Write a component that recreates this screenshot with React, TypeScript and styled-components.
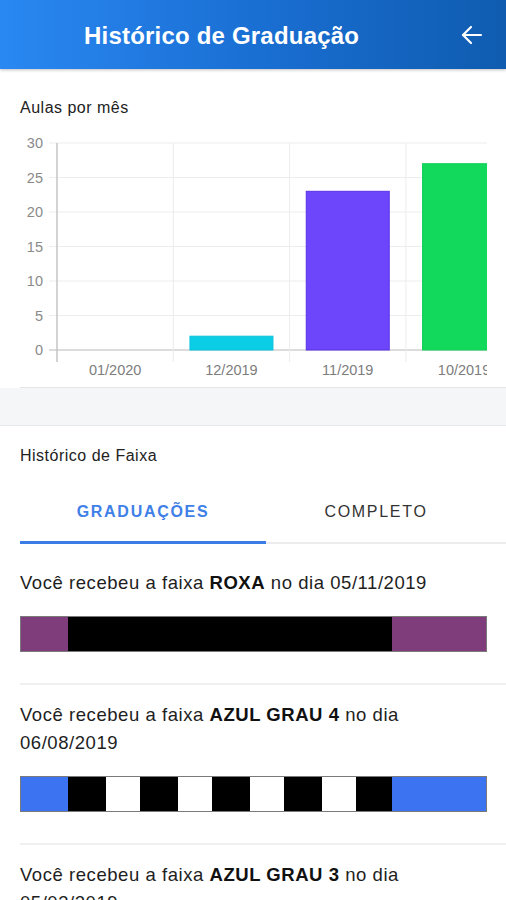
import React from "react";
import styled, { createGlobalStyle } from "styled-components";

const Global = createGlobalStyle`
  html, body { margin: 0; padding: 0; background: #ffffff; }
  body { font-family: "Liberation Sans", Arial, sans-serif; color: #1c1c1c; }
  * { box-sizing: border-box; }
`;

const Page = styled.div`
  width: 506px;
  height: 900px;
  overflow: hidden;
  background: #ffffff;
`;

const Header = styled.header`
  height: 69px;
  display: flex;
  align-items: center;
  background: linear-gradient(90deg, #2a88f2 0%, #1a6fd3 50%, #0f5cb0 100%);
  box-shadow: 0 1px 3px rgba(0, 0, 0, 0.25);
  position: relative;
  z-index: 1;
`;

const Title = styled.h1`
  margin: 2px 0 0 84px;
  font-size: 24px;
  font-weight: 700;
  color: #ffffff;
  letter-spacing: 0.2px;
`;

const BackButton = styled.button`
  margin-left: auto;
  margin-right: 22px;
  background: none;
  border: 0;
  padding: 0;
  width: 24px;
  height: 24px;
  display: flex;
  align-items: center;
  justify-content: center;
  color: #ffffff;
`;

const ChartCard = styled.section`
  padding: 29px 0 0 20px;
`;

const SectionLabel = styled.div`
  font-size: 16px;
  line-height: 20px;
  letter-spacing: 0.5px;
  color: #222222;
`;

const ChartBox = styled.div`
  margin-top: 17px;
  width: 486px;
  height: 253px;
  border-bottom: 1px solid #e4e4e4;
`;

const ChartClip = styled.div`
  width: 467px;
  overflow: hidden;
  svg { display: block; }
`;

const Band = styled.div`
  height: 38px;
  background: #f5f6f8;
  border-bottom: 1px solid #e8e9ec;
`;

const HistoryCard = styled.section`
  padding-top: 20px;
`;

const HistoryLabel = styled(SectionLabel)`
  padding-left: 20px;
`;

const Tabs = styled.div`
  margin: 20px 0 0 20px;
  height: 58px;
  display: flex;
  border-bottom: 2px solid #ececec;
`;

const Tab = styled.div<{ $active?: boolean; $w: number }>`
  width: ${(p) => p.$w}px;
  display: flex;
  align-items: center;
  justify-content: center;
  padding-bottom: 4px;
  font-size: 16px;
  letter-spacing: 1.7px;
  font-weight: ${(p) => (p.$active ? 700 : 400)};
  color: ${(p) => (p.$active ? "#3f80e8" : "#333333")};
  margin-bottom: -2px;
  border-bottom: 3px solid ${(p) => (p.$active ? "#3b7de6" : "transparent")};
`;

const List = styled.div`
  padding-top: 9px;
`;

const Item = styled.div<{ $last?: boolean }>`
  margin-left: 20px;
  padding: 16px 19px 31px 0;
  border-bottom: ${(p) => (p.$last ? "none" : "2px solid #f0f0f0")};
`;

const ItemText = styled.p`
  margin: 0;
  font-size: 18.5px;
  line-height: 28px;
  letter-spacing: 0.55px;
  color: #1e1e1e;
  b { font-weight: 700; color: #111; }
`;

const Belt = styled.div`
  margin-top: 19px;
  height: 36px;
  display: flex;
  border: 1px solid #7a7a7a;
`;

const Tip = styled.div<{ $color: string; $w: number }>`
  width: ${(p) => p.$w}px;
  background: ${(p) => p.$color};
`;

const BlackBar = styled.div`
  flex: 1;
  display: flex;
  background: #000000;
`;

const Stripe = styled.div<{ $white?: boolean; $w: number }>`
  width: ${(p) => p.$w}px;
  background: ${(p) => (p.$white ? "#ffffff" : "#000000")};
`;

type BeltProps = { color: string; degrees: number };

const BeltView: React.FC<BeltProps> = ({ color, degrees }) => {
  const stripes: React.ReactNode[] = [];
  for (let i = 0; i < degrees; i++) {
    stripes.push(<Stripe key={`b${i}`} $w={38} />);
    stripes.push(<Stripe key={`w${i}`} $white $w={34} />);
  }
  return (
    <Belt>
      <Tip $color={color} $w={47} />
      <BlackBar>{stripes}</BlackBar>
      <Tip $color={color} $w={94} />
    </Belt>
  );
};

const data = [
  { label: "01/2020", value: 0, color: "transparent", stroke: "transparent" },
  { label: "12/2019", value: 2, color: "#0ccde6", stroke: "#0bc3db" },
  { label: "11/2019", value: 23, color: "#6d45fb", stroke: "#5a33e6" },
  { label: "10/2019", value: 27, color: "#12d95c", stroke: "#10cf57" },
];

const FONT = "Liberation Sans, Arial, sans-serif";

const Chart: React.FC = () => {
  const x0 = 37;
  const top = 8;
  const bottom = 215;
  const unit = (bottom - top) / 30;
  const cat = 116.3;
  const barW = 83;
  const ticks = [0, 5, 10, 15, 20, 25, 30];
  return (
    <svg width="486" height="252" viewBox="0 0 486 252">
      {ticks.map((t) => {
        const y = bottom - t * unit;
        return (
          <g key={t}>
            <line x1={x0 - 8} x2={486} y1={y} y2={y} stroke={t === 0 ? "#d0d0d0" : "#ededed"} strokeWidth={t === 0 ? 1.5 : 1} />
            <text x={x0 - 14} y={y + 5} textAnchor="end" fontSize="14.5" fill="#8a8a8a" fontFamily={FONT}>
              {t}
            </text>
          </g>
        );
      })}
      {[1, 2, 3, 4].map((i) => (
        <line key={i} x1={x0 + cat * i} x2={x0 + cat * i} y1={top} y2={bottom + 12} stroke="#ececec" strokeWidth={1} />
      ))}
      <line x1={x0} x2={x0} y1={top} y2={bottom + 12} stroke="#c4c4c4" strokeWidth={1.5} />
      {data.map((d, i) => {
        const cx = x0 + cat * i + cat / 2;
        const h = d.value * unit;
        return (
          <g key={d.label}>
            {d.value > 0 && (
              <rect x={cx - barW / 2} y={bottom - h} width={barW} height={h} fill={d.color} stroke={d.stroke} strokeWidth={1} />
            )}
            <text x={cx} y={bottom + 25} textAnchor="middle" fontSize="14.5" fill="#7d7d7d" fontFamily={FONT}>
              {d.label}
            </text>
          </g>
        );
      })}
    </svg>
  );
};

export default function App() {
  return (
    <Page>
      <Global />
      <Header>
        <Title>Histórico de Graduação</Title>
        <BackButton aria-label="Voltar">
          <svg width="22" height="20" viewBox="0 0 22 20" fill="none" stroke="#ffffff" strokeWidth="2.2" strokeLinecap="round" strokeLinejoin="round">
            <line x1="2" y1="10" x2="20" y2="10" />
            <polyline points="10,2 2,10 10,18" />
          </svg>
        </BackButton>
      </Header>
      <ChartCard>
        <SectionLabel>Aulas por mês</SectionLabel>
        <ChartBox>
          <ChartClip>
            <Chart />
          </ChartClip>
        </ChartBox>
      </ChartCard>
      <Band />
      <HistoryCard>
        <HistoryLabel>Histórico de Faixa</HistoryLabel>
        <Tabs>
          <Tab $active $w={246}>GRADUAÇÕES</Tab>
          <Tab $w={220}>COMPLETO</Tab>
        </Tabs>
        <List>
          <Item>
            <ItemText>
              Você recebeu a faixa <b>ROXA</b> no dia 05/11/2019
            </ItemText>
            <BeltView color="#7f3d7c" degrees={0} />
          </Item>
          <Item>
            <ItemText>
              Você recebeu a faixa <b>AZUL GRAU 4</b> no dia 06/08/2019
            </ItemText>
            <BeltView color="#3b73f1" degrees={4} />
          </Item>
          <Item $last>
            <ItemText>
              Você recebeu a faixa <b>AZUL GRAU 3</b> no dia 05/03/2019
            </ItemText>
            <BeltView color="#3b73f1" degrees={3} />
          </Item>
        </List>
      </HistoryCard>
    </Page>
  );
}
